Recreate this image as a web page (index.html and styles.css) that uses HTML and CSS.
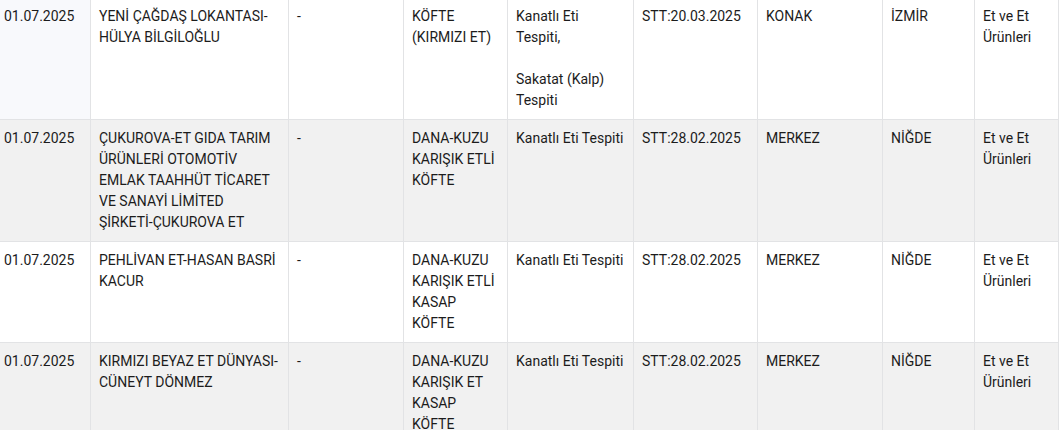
FILE: index.html
```html
<!DOCTYPE html>
<html lang="tr">
<head>
<meta charset="utf-8">
<title>Liste</title>
<link rel="stylesheet" href="styles.css">
</head>
<body>
<div class="wrap">
<table class="list">
<colgroup>
<col class="c1"><col class="c2"><col class="c3"><col class="c4"><col class="c5"><col class="c6"><col class="c7"><col class="c8"><col class="c9">
</colgroup>
<tbody>
<tr class="odd">
<td class="first hl">01.07.2025</td>
<td>YENİ ÇAĞDAŞ LOKANTASI-HÜLYA BİLGİLOĞLU</td>
<td>-</td>
<td>KÖFTE (KIRMIZI ET)</td>
<td>Kanatlı Eti Tespiti,<br><br>Sakatat (Kalp) Tespiti</td>
<td>STT:20.03.2025</td>
<td>KONAK</td>
<td>İZMİR</td>
<td>Et ve Et Ürünleri</td>
</tr>
<tr class="even">
<td class="first">01.07.2025</td>
<td>ÇUKUROVA-ET GIDA TARIM ÜRÜNLERİ OTOMOTİV EMLAK TAAHHÜT TİCARET VE SANAYİ LİMİTED ŞİRKETİ-ÇUKUROVA ET</td>
<td>-</td>
<td>DANA-KUZU KARIŞIK ETLİ KÖFTE</td>
<td>Kanatlı Eti Tespiti</td>
<td>STT:28.02.2025</td>
<td>MERKEZ</td>
<td>NİĞDE</td>
<td>Et ve Et Ürünleri</td>
</tr>
<tr class="odd">
<td class="first">01.07.2025</td>
<td>PEHLİVAN ET-HASAN BASRİ KACUR</td>
<td>-</td>
<td>DANA-KUZU KARIŞIK ETLİ KASAP KÖFTE</td>
<td>Kanatlı Eti Tespiti</td>
<td>STT:28.02.2025</td>
<td>MERKEZ</td>
<td>NİĞDE</td>
<td>Et ve Et Ürünleri</td>
</tr>
<tr class="even">
<td class="first">01.07.2025</td>
<td>KIRMIZI BEYAZ ET DÜNYASI-CÜNEYT DÖNMEZ</td>
<td>-</td>
<td>DANA-KUZU KARIŞIK ET KASAP KÖFTE</td>
<td>Kanatlı Eti Tespiti</td>
<td>STT:28.02.2025</td>
<td>MERKEZ</td>
<td>NİĞDE</td>
<td>Et ve Et Ürünleri</td>
</tr>
</tbody>
</table>
</div>
</body>
</html>
```
FILE: styles.css
```css
html, body {
  margin: 0;
  padding: 0;
  background: #ffffff;
}
body {
  font-family: Roboto, "Liberation Sans", Arial, sans-serif;
  font-size: 14px;
  line-height: 21px;
  color: #1c1c1c;
  overflow: hidden;
}
.wrap {
  margin-top: -3px;
  margin-left: -4px;
  width: 1062px;
}
.list {
  border-collapse: collapse;
  table-layout: fixed;
  width: 1062px;
}
.c1 { width: 94px; }
.c2 { width: 198px; }
.c3 { width: 115px; }
.c4 { width: 104px; }
.c5 { width: 126px; }
.c6 { width: 124px; }
.c7 { width: 125px; }
.c8 { width: 92px; }
.c9 { width: 84px; }
.list td {
  border: 1px solid #e2e3e5;
  padding: 8px;
  vertical-align: top;
  word-wrap: break-word;
}
.list td.first {
  padding-left: 7px;
}
.odd td { background: #ffffff; }
.even td { background: #f1f1f1; }
.odd td.hl { background: #f8f9fc; }
```
